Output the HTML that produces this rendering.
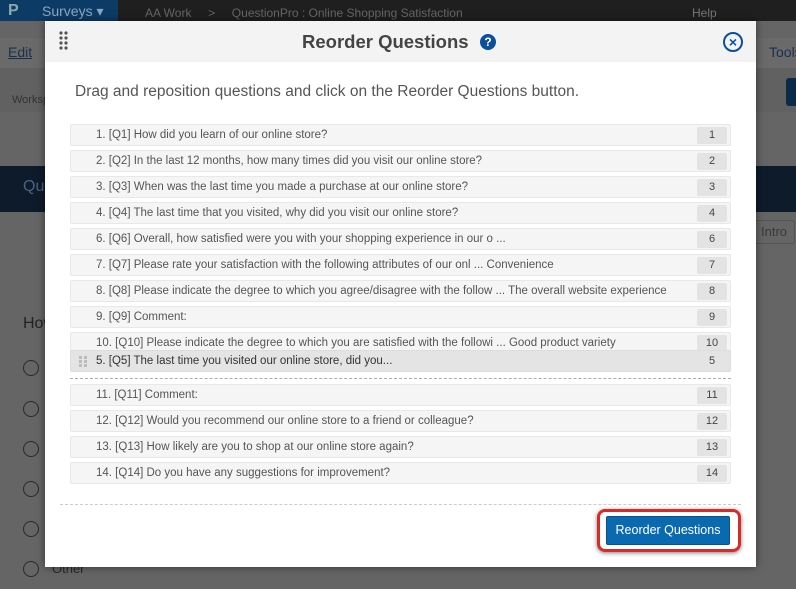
<!DOCTYPE html>
<html><head><meta charset="utf-8"><style>
*{margin:0;padding:0;box-sizing:border-box}
body{width:796px;height:589px;overflow:hidden;background:#656565;font-family:"Liberation Sans",sans-serif;position:relative}
.a{position:absolute}
.row{position:absolute;left:70px;width:661px;height:22px;background:#f5f5f5;border:1px solid #e8e8e8;border-radius:2px;font-size:11.5px;color:#555;line-height:20px;padding-left:25px;white-space:nowrap}
.row .n{position:absolute;right:3px;top:2px;width:30px;height:17px;background:#e3e3e3;border-radius:2px;text-align:center;line-height:17px;color:#444;font-size:11px}
</style></head><body>
<div class="a" style="left:0;top:0;width:796px;height:21px;background:#1f1f1f"></div>
<div class="a" style="left:0;top:0;width:118px;height:21px;background:#0c3c66"></div>
<div class="a" style="left:8px;top:2px;color:#8aa;font-size:16px;font-weight:bold">P</div>
<div class="a" style="left:42px;top:3px;color:#8ea6c0;font-size:14px">Surveys &#9662;</div>
<div class="a" style="left:145px;top:6px;color:#666;font-size:12px">AA Work &nbsp;&nbsp;&nbsp;&nbsp;&gt;&nbsp;&nbsp;&nbsp;&nbsp; QuestionPro : Online Shopping Satisfaction</div>
<div class="a" style="left:692px;top:6px;color:#777;font-size:12px">Help</div>
<div class="a" style="left:0;top:38px;width:796px;height:30px;background:#6a6a6a"></div>
<div class="a" style="left:8px;top:44px;color:#1a3050;font-size:14px;text-decoration:underline">Edit</div>
<div class="a" style="left:769px;top:44px;color:#1a3050;font-size:14px">Tools</div>
<div class="a" style="left:0;top:68px;width:796px;height:44px;background:#616161"></div>
<div class="a" style="left:12px;top:94px;color:#333;font-size:11px">Worksp</div>
<div class="a" style="left:786px;top:78px;width:20px;height:28px;background:#0a2a48;border-radius:3px"></div>
<div class="a" style="left:0;top:166px;width:796px;height:46px;background:#0d1b2b"></div>
<div class="a" style="left:23px;top:178px;color:#4a6480;font-size:16px">Que</div>
<div class="a" style="left:755px;top:220px;width:40px;height:24px;border:1px solid #555;border-radius:3px;color:#3a3a3a;font-size:13px;line-height:22px;padding-left:5px">Intro</div>
<div class="a" style="left:23px;top:315px;color:#222;font-size:16px">How</div>
<div class="a" style="left:23px;top:360px;width:16px;height:16px;border:1.5px solid #2a2a2a;border-radius:50%"></div>
<div class="a" style="left:23px;top:401px;width:16px;height:16px;border:1.5px solid #2a2a2a;border-radius:50%"></div>
<div class="a" style="left:23px;top:441px;width:16px;height:16px;border:1.5px solid #2a2a2a;border-radius:50%"></div>
<div class="a" style="left:23px;top:481px;width:16px;height:16px;border:1.5px solid #2a2a2a;border-radius:50%"></div>
<div class="a" style="left:23px;top:521px;width:16px;height:16px;border:1.5px solid #2a2a2a;border-radius:50%"></div>
<div class="a" style="left:23px;top:561px;width:16px;height:16px;border:1.5px solid #2a2a2a;border-radius:50%"></div>
<div class="a" style="left:52px;top:561px;color:#2a2a2a;font-size:13px">Other</div>

<div class="a" style="left:45px;top:21px;width:711px;height:546px;background:#fff;box-shadow:0 0 8px rgba(0,0,0,.5)">
 <div class="a" style="left:0;top:0;width:711px;height:41px;background:#f3f3f3"></div>
 <svg class="a" style="left:14px;top:10px" width="10" height="20"><g fill="#555"><circle cx="2" cy="2" r="1.6"/><circle cx="7" cy="2" r="1.6"/><circle cx="2" cy="7" r="1.6"/><circle cx="7" cy="7" r="1.6"/><circle cx="2" cy="12" r="1.6"/><circle cx="7" cy="12" r="1.6"/><circle cx="2" cy="17" r="1.6"/><circle cx="7" cy="17" r="1.6"/></g></svg>
 <div class="a" style="left:257px;top:10px;font-size:18.5px;font-weight:bold;color:#444;white-space:nowrap">Reorder Questions</div>
 <div class="a" style="left:435px;top:13px;width:16px;height:16px;border-radius:50%;background:#0b4f9c;color:#fff;font-size:12px;font-weight:bold;text-align:center;line-height:16px">?</div>
 <div class="a" style="left:678px;top:11px;width:20px;height:20px;border-radius:50%;border:2px solid #0b4f9c;color:#0b4f9c;font-size:14px;font-weight:bold;text-align:center;line-height:16px">×</div>
 <div class="a" style="left:30px;top:62px;font-size:15.5px;color:#555;white-space:nowrap">Drag and reposition questions and click on the Reorder Questions button.</div>
 <div class="a" style="left:15px;top:483px;width:681px;border-top:1px dashed #ccc"></div>
 <div class="a" style="left:552px;top:488px;width:144px;height:43px;border:3px solid #d62b2b;border-radius:8px;box-shadow:0 1px 4px rgba(0,0,0,.5)"></div>
 <div class="a" style="left:561px;top:495px;width:124px;height:29px;background:#0a6ab0;border:1px solid #07528a;border-radius:2px;color:#fff;font-size:12.5px;text-align:center;line-height:27px">Reorder Questions</div>
</div>

<div class="row" style="top:124px">1. [Q1] How did you learn of our online store?<span class="n">1</span></div>
<div class="row" style="top:150px">2. [Q2] In the last 12 months, how many times did you visit our online store?<span class="n">2</span></div>
<div class="row" style="top:176px">3. [Q3] When was the last time you made a purchase at our online store?<span class="n">3</span></div>
<div class="row" style="top:202px">4. [Q4] The last time that you visited, why did you visit our online store?<span class="n">4</span></div>
<div class="row" style="top:228px">6. [Q6] Overall, how satisfied were you with your shopping experience in our o ...<span class="n">6</span></div>
<div class="row" style="top:254px">7. [Q7] Please rate your satisfaction with the following attributes of our onl ... Convenience<span class="n">7</span></div>
<div class="row" style="top:280px">8. [Q8] Please indicate the degree to which you agree/disagree with the follow ... The overall website experience<span class="n">8</span></div>
<div class="row" style="top:306px">9. [Q9] Comment:<span class="n">9</span></div>
<div class="row" style="top:332px;height:20px;line-height:20px">10. [Q10] Please indicate the degree to which you are satisfied with the followi ... Good product variety<span class="n">10</span></div>
<div class="a" style="left:70px;top:378px;width:661px;border-top:1px dashed #aab"></div>
<div class="row" style="top:350px;background:#e4e4e4;color:#333;border-color:#ddd">5. [Q5] The last time you visited our online store, did you...<span class="n" style="background:#e4e4e4">5</span>
<svg class="a" style="left:8px;top:5px" width="10" height="12"><g fill="#bbb"><rect x="0" y="0" width="3" height="3"/><rect x="5" y="0" width="3" height="3"/><rect x="0" y="4" width="3" height="3"/><rect x="5" y="4" width="3" height="3"/><rect x="0" y="8" width="3" height="3"/><rect x="5" y="8" width="3" height="3"/></g></svg></div>
<div class="row" style="top:384px">11. [Q11] Comment:<span class="n">11</span></div>
<div class="row" style="top:410px">12. [Q12] Would you recommend our online store to a friend or colleague?<span class="n">12</span></div>
<div class="row" style="top:436px">13. [Q13] How likely are you to shop at our online store again?<span class="n">13</span></div>
<div class="row" style="top:462px">14. [Q14] Do you have any suggestions for improvement?<span class="n">14</span></div>
</body></html>
